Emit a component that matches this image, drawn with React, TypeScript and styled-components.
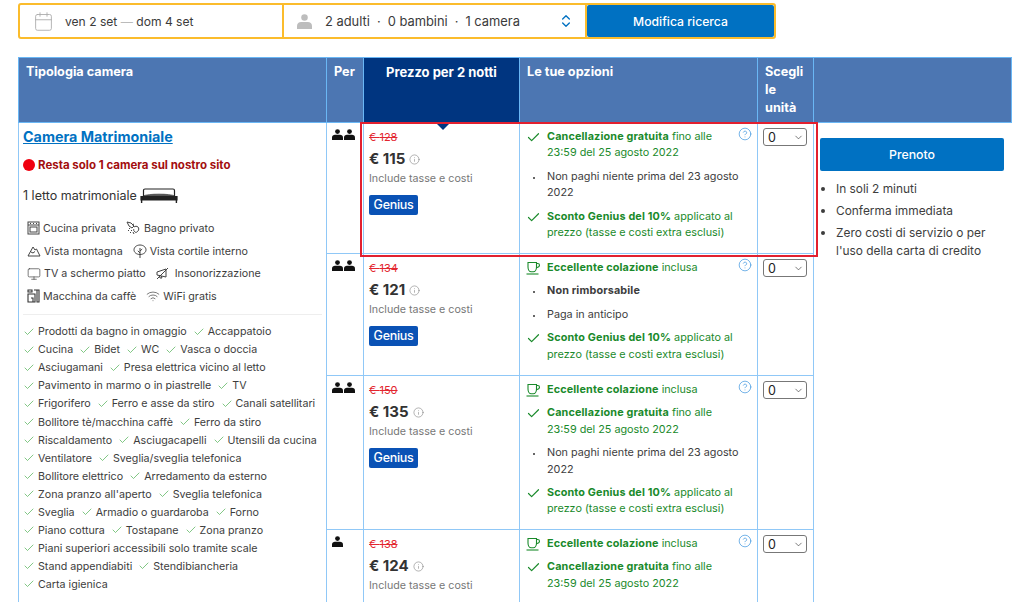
import React from 'react';
import styled, { createGlobalStyle } from 'styled-components';
import { Calendar, Check, ChevronDown, ChevronsUpDown, CircleHelp, Info, Monitor, Wifi } from 'lucide-react';

const GlobalStyle = createGlobalStyle`
  html, body {
    margin: 0;
    height: 602px;
    overflow: hidden;
    background: #fff;
    font-family: Inter, "Liberation Sans", sans-serif;
    color: #333;
  }
  * { box-sizing: border-box; }
`;

const Page = styled.div`
  padding: 3px 13px 0 18px;
`;

const SearchBar = styled.div`
  display: flex;
  width: 758px;
  height: 36px;
  border: 2px solid #fbbc2c;
  border-radius: 3px;
  margin-bottom: 18px;
  color: #3b3b3b;
`;

const SearchField = styled.div<{ $width: number }>`
  display: flex;
  align-items: center;
  width: ${(p) => p.$width}px;
  padding-left: 13px;
  border-right: 2px solid #fbbc2c;
  position: relative;
`;

const FieldText = styled.span<{ $left: number; $size: number }>`
  margin-left: ${(p) => p.$left}px;
  font-size: ${(p) => p.$size}px;
  white-space: pre;
`;

const Muted = styled.span`
  color: #bbb;
`;

const Dot = styled.span`
  margin: 0 7px;
`;

const StepperIcon = styled.span`
  position: absolute;
  right: 11px;
  top: 8px;
  display: flex;
  color: #0071c2;
`;

const SearchButton = styled.button`
  flex: 1;
  border: 0;
  border-radius: 2px;
  background: #0071c2;
  color: #fff;
  font: 500 12.2px Inter, "Liberation Sans", sans-serif;
`;

const Frame = styled.div`
  position: relative;
  width: 993px;
`;

const RedBox = styled.div`
  position: absolute;
  left: 342px;
  top: 65px;
  width: 458px;
  height: 135px;
  border: 2px solid #e2202f;
  pointer-events: none;
`;

const Table = styled.table`
  width: 993px;
  table-layout: fixed;
  border-collapse: collapse;
`;

const HeadCell = styled.th<{ $active?: boolean; $center?: boolean }>`
  position: relative;
  height: 65px;
  padding: 5px 7px 0;
  vertical-align: top;
  text-align: ${(p) => (p.$center ? 'center' : 'left')};
  font-size: ${(p) => (p.$center ? 13 : 12.7)}px;
  font-weight: 700;
  line-height: 18px;
  color: #fff;
  background: ${(p) => (p.$active ? '#003580' : '#4c76b2')};
  border: 1px solid #6ab7f5;

  ${(p) =>
    p.$active &&
    `&::after {
      content: "";
      position: absolute;
      left: 71px;
      bottom: -8px;
      border-left: 8px solid transparent;
      border-right: 8px solid transparent;
      border-top: 8px solid #003580;
    }`}
`;

const Cell = styled.td`
  padding: 0;
  vertical-align: top;
  border: 1px solid #90c8f7;
`;

const RoomCell = styled(Cell)`
  padding: 4px 4px 0;
`;

const SideCell = styled.td`
  padding: 15px 6px 0;
  vertical-align: top;
`;

const RoomName = styled.a`
  display: block;
  font-size: 14.3px;
  font-weight: 700;
  line-height: 20px;
  color: #0071c2;
  text-decoration: underline;
`;

const Scarcity = styled.div`
  display: flex;
  align-items: center;
  gap: 3px;
  margin-top: 11px;
  font-size: 11.5px;
  font-weight: 700;
  line-height: 14px;
  color: #a30e0e;
`;

const RedDot = styled.span`
  width: 12px;
  height: 12px;
  border-radius: 50%;
  background: #f0000f;
`;

const BedLine = styled.div`
  display: flex;
  align-items: center;
  gap: 3px;
  margin-top: 14px;
  font-size: 12.5px;
  line-height: 20px;
`;

const Facilities = styled.div`
  margin: 11px 0 8px;
  padding: 0 4px 6px;
  border-bottom: 1px solid #eee;
`;

const FacilityRow = styled.div`
  display: flex;
  align-items: center;
  gap: 10px;
  height: 22.7px;
`;

const Facility = styled.span`
  display: flex;
  align-items: center;
  gap: 3px;
  font-size: 10.7px;
  color: #3d3d3d;
  white-space: pre;

  svg {
    flex: none;
    color: #444;
  }
`;

const AmenityRow = styled.div`
  display: flex;
  gap: 6px;
  height: 18.05px;
  align-items: center;
`;

const Amenity = styled.span`
  display: flex;
  align-items: center;
  gap: 3px;
  font-size: 10.7px;
  color: #3d3d3d;
  white-space: nowrap;

  svg {
    flex: none;
    color: #4caf50;
  }
`;

const PersonsCell = styled(Cell)`
  padding: 6px 0 0 5px;
`;

const PriceCell = styled(Cell)`
  padding: 7px 5px 0;
`;

const OldPrice = styled.div`
  font-size: 11px;
  line-height: 14px;
  color: #e3262f;
  text-decoration: line-through;
`;

const Price = styled.div`
  display: flex;
  align-items: center;
  gap: 4px;
  margin-top: 5px;
  font-size: 15px;
  font-weight: 700;
  line-height: 20px;
  color: #333;

  svg {
    color: #777;
  }
`;

const Taxes = styled.div`
  margin-top: 3px;
  font-size: 10.7px;
  line-height: 14px;
  color: #777;
`;

const Genius = styled.span`
  display: inline-block;
  width: 49px;
  height: 20px;
  margin-top: 9px;
  border-radius: 2px;
  background: #0a52b5;
  color: #fff;
  font-size: 12.5px;
  font-weight: 500;
  line-height: 20px;
  text-align: center;
  letter-spacing: -0.3px;
`;

const OptionsCell = styled(Cell)`
  position: relative;
  padding: 6px 0 0 6px;
`;

const Help = styled.span`
  position: absolute;
  right: 5px;
  top: 4px;
  display: flex;
  color: #3b93de;
`;

const Option = styled.div`
  display: flex;
  margin-bottom: 7px;
  font-size: 10.8px;
  line-height: 16.4px;
`;

const OptionIcon = styled.span`
  flex: none;
  display: flex;
  justify-content: center;
  width: 15px;
  margin-right: 6px;
  padding-top: 1px;
  color: #1a8a2b;
`;

const Bullet = styled.span`
  width: 2px;
  height: 2px;
  margin-top: 7px;
  border-radius: 50%;
  background: #333;
`;

const OptionText = styled.span<{ $tone: 'good' | 'plain' }>`
  width: 192px;
  white-space: pre-line;
  color: ${(p) => (p.$tone === 'good' ? '#1a8a2b' : '#3d3d3d')};

  strong {
    letter-spacing: 0.15px;
  }
`;

const ChooseCell = styled(Cell)`
  padding: 5px 0 0 5px;
`;

const Select = styled.div`
  position: relative;
  display: flex;
  align-items: center;
  width: 44px;
  height: 18px;
  padding-left: 4px;
  border: 1px solid #777;
  border-radius: 3px;
  font-size: 12.5px;
  color: #222;

  svg {
    position: absolute;
    right: 2px;
    top: 3px;
    color: #333;
  }
`;

const BookButton = styled.button`
  display: block;
  width: 184px;
  height: 33px;
  border: 0;
  border-radius: 2px;
  background: #0071c2;
  color: #fff;
  font: 500 12.3px Inter, "Liberation Sans", sans-serif;
`;

const Perks = styled.ul`
  margin: 9px 0 0;
  padding: 0 0 0 16px;
  font-size: 11.9px;
  line-height: 18px;
  color: #3d3d3d;

  li {
    margin-bottom: 4px;
  }
`;

const Persons = styled.div`
  display: flex;
  gap: 1px;
`;

const PersonGlyph: React.FC<{ color?: string; size?: number }> = ({ color = '#111', size = 11 }) => (
  <svg width={size} height={size} viewBox="0 0 11 11" fill={color}>
    <circle cx="5.5" cy="2.6" r="2.4" />
    <path d="M0 11V8.6C0 6.8 1.4 5.8 3 5.8h5c1.6 0 3 1 3 2.8V11z" />
  </svg>
);

const BedIcon = () => (
  <svg width="38" height="16" viewBox="0 0 38 16" fill="none" stroke="#222" strokeWidth="1.2">
    <path d="M3.5 8V2.5C3.5 1.6 4.1 1 5 1h28c.9 0 1.5.6 1.5 1.5V8" />
    <path d="M3 8c5-2.5 27-2.5 32 0" fill="#555" strokeWidth="0.6" />
    <path d="M1 8.5h36v3.5H1z" fill="#222" />
    <path d="M1.6 12v3M36.4 12v3" strokeWidth="1.4" />
  </svg>
);

const CupIcon = () => (
  <svg width="15" height="15" viewBox="0 0 15 15" fill="none" stroke="currentColor" strokeWidth="1.1">
    <path d="M2 1.5h8.5v4.5c0 2.6-1.5 4.8-3.2 4.8H5.2C3.5 10.8 2 8.6 2 6z" />
    <path d="M10.5 2.5h1.2c1.2 0 1.8.8 1.8 1.8s-.8 2-3.4 2.6" />
    <path d="M0.5 13h12" />
  </svg>
);

const KitchenIcon = () => (
  <svg width="13" height="14" viewBox="0 0 13 14" fill="none" stroke="#444" strokeWidth="1">
    <rect x="1" y="1" width="11" height="12" />
    <path d="M1 4h11" />
    <rect x="3" y="6" width="7" height="5" />
    <path d="M3 2.5h1M6 2.5h1M9 2.5h1" />
  </svg>
);

const ShowerIcon = () => (
  <svg width="15" height="15" viewBox="0 0 15 15" fill="none" stroke="#444" strokeWidth="1">
    <path d="M1 1l4 1 3 3-2 2-3-2z" />
    <path d="M6 4l2-1M8 6c1-1 3-1 4 0s1 3 0 4-2 2-3 1-2-2-1-3" />
    <path d="M3 7l1 1M5 9l1 1M7 11l1 2M2 9l1 1M4 11l1 1" />
  </svg>
);

const MountainIcon = () => (
  <svg width="14" height="12" viewBox="0 0 14 12" fill="none" stroke="#444" strokeWidth="1">
    <path d="M1 11L6 2l2 3 1.5-1L13 11z" />
    <path d="M4 7l2 1 2-1.5" />
  </svg>
);

const TreeIcon = () => (
  <svg width="14" height="15" viewBox="0 0 14 15" fill="none" stroke="#444" strokeWidth="1">
    <path d="M7 1c3.4 0 6 2.2 6 4.8 0 2.7-2.6 4.7-6 4.7S1 8.500 1 5.800C1 3.200 3.600 1 7 1z" />
    <path d="M7 14V4M7 7l2.200-2M7 9L4.800 6.800" />
  </svg>
);

const QuietIcon = () => (
  <svg width="13" height="13" viewBox="0 0 13 13" fill="none" stroke="#444" strokeWidth="1">
    <path d="M1 5l9-3v8L1 8z" />
    <path d="M3 8.500l1 2.500h2l-.8-2M1 12L12 1" />
  </svg>
);

const CoffeeMachineIcon = () => (
  <svg width="13" height="14" viewBox="0 0 13 14" fill="none" stroke="#333" strokeWidth="1.1">
    <path d="M1 1h4v2H1zM1 5h7v8H1zM10 1h2v12h-2zM7 1h3M4 9h2v4" />
  </svg>
);

type Item = { icon: React.ReactNode; label: string };

const facilityRows: Item[][] = [
  [
    { icon: <KitchenIcon />, label: 'Cucina privata' },
    { icon: <ShowerIcon />, label: 'Bagno privato' },
  ],
  [
    { icon: <MountainIcon />, label: 'Vista montagna' },
    { icon: <TreeIcon />, label: 'Vista cortile interno' },
  ],
  [
    { icon: <Monitor size={14} strokeWidth={1.2} />, label: 'TV a schermo piatto' },
    { icon: <QuietIcon />, label: ' Insonorizzazione' },
  ],
  [
    { icon: <CoffeeMachineIcon />, label: 'Macchina da caffè' },
    { icon: <Wifi size={14} strokeWidth={1.2} />, label: 'WiFi gratis' },
  ],
];

const amenityRows = [
  ['Prodotti da bagno in omaggio', 'Accappatoio'],
  ['Cucina', 'Bidet', 'WC', 'Vasca o doccia'],
  ['Asciugamani', 'Presa elettrica vicino al letto'],
  ['Pavimento in marmo o in piastrelle', 'TV'],
  ['Frigorifero', 'Ferro e asse da stiro', 'Canali satellitari'],
  ['Bollitore tè/macchina caffè', 'Ferro da stiro'],
  ['Riscaldamento', 'Asciugacapelli', 'Utensili da cucina'],
  ['Ventilatore', 'Sveglia/sveglia telefonica'],
  ['Bollitore elettrico', 'Arredamento da esterno'],
  ["Zona pranzo all'aperto", 'Sveglia telefonica'],
  ['Sveglia', 'Armadio o guardaroba', 'Forno'],
  ['Piano cottura', 'Tostapane', 'Zona pranzo'],
  ['Piani superiori accessibili solo tramite scale'],
  ['Stand appendiabiti', 'Stendibiancheria'],
  ['Carta igienica'],
];

type Opt = { kind: 'check' | 'cup' | 'dot'; bold?: string; text?: string };

const cancel: Opt = { kind: 'check', bold: 'Cancellazione gratuita', text: ' fino alle\n23:59 del 25 agosto 2022' };
const payLater: Opt = { kind: 'dot', text: 'Non paghi niente prima del 23 agosto\n2022' };
const genius: Opt = { kind: 'check', bold: 'Sconto Genius del 10%', text: ' applicato al\nprezzo (tasse e costi extra esclusi)' };
const breakfast: Opt = { kind: 'cup', bold: 'Eccellente colazione', text: ' inclusa' };

// the last row runs off the bottom of the picture, only its visible part is kept
const rooms = [
  { persons: 2, old: 128, price: 115, height: 131, badge: true, options: [cancel, payLater, genius] },
  {
    persons: 2,
    old: 134,
    price: 121,
    height: 122,
    badge: true,
    options: [
      breakfast,
      { kind: 'dot', bold: 'Non rimborsabile' } as Opt,
      { kind: 'dot', text: 'Paga in anticipo' } as Opt,
      genius,
    ],
  },
  { persons: 2, old: 150, price: 135, height: 154, badge: true, options: [breakfast, cancel, payLater, genius] },
  { persons: 1, old: 138, price: 124, height: 74, badge: false, options: [breakfast, cancel] },
];

const OptionLine: React.FC<{ option: Opt }> = ({ option }) => (
  <Option>
    <OptionIcon>
      {option.kind === 'check' && <Check size={15} strokeWidth={1.9} />}
      {option.kind === 'cup' && <CupIcon />}
      {option.kind === 'dot' && <Bullet />}
    </OptionIcon>
    <OptionText $tone={option.kind === 'dot' ? 'plain' : 'good'}>
      {option.bold && <strong>{option.bold}</strong>}
      {option.text}
    </OptionText>
  </Option>
);

const App: React.FC = () => (
  <Page>
    <GlobalStyle />
    <SearchBar>
      <SearchField $width={264}>
        <Calendar size={21} strokeWidth={1} color="#aaa" />
        <FieldText $left={11} $size={12.1}>
          ven 2 set <Muted>—</Muted> dom 4 set
        </FieldText>
      </SearchField>
      <SearchField $width={303}>
        <PersonGlyph color="#bdbdbd" size={15} />
        <FieldText $left={13} $size={12.9}>
          2 adulti<Dot>·</Dot>0 bambini<Dot>·</Dot>1 camera
        </FieldText>
        <StepperIcon>
          <ChevronsUpDown size={16} strokeWidth={2} />
        </StepperIcon>
      </SearchField>
      <SearchButton>Modifica ricerca</SearchButton>
    </SearchBar>

    <Frame>
      <Table>
        <colgroup>
          <col style={{ width: 308 }} />
          <col style={{ width: 37 }} />
          <col style={{ width: 156 }} />
          <col style={{ width: 238 }} />
          <col style={{ width: 56 }} />
          <col style={{ width: 198 }} />
        </colgroup>
        <thead>
          <tr>
            <HeadCell>Tipologia camera</HeadCell>
            <HeadCell>Per</HeadCell>
            <HeadCell $active $center>
              Prezzo per 2 notti
            </HeadCell>
            <HeadCell>Le tue opzioni</HeadCell>
            <HeadCell>Scegli le unità</HeadCell>
            <HeadCell />
          </tr>
        </thead>
        <tbody>
          {rooms.map((room, i) => (
            <tr key={room.price} style={{ height: room.height }}>
              {i === 0 && (
                <RoomCell rowSpan={4}>
                  <RoomName>Camera Matrimoniale</RoomName>
                  <Scarcity>
                    <RedDot />
                    Resta solo 1 camera sul nostro sito
                  </Scarcity>
                  <BedLine>
                    1 letto matrimoniale
                    <BedIcon />
                  </BedLine>
                  <Facilities>
                    {facilityRows.map((row, r) => (
                      <FacilityRow key={r}>
                        {row.map((f) => (
                          <Facility key={f.label}>
                            {f.icon}
                            {f.label}
                          </Facility>
                        ))}
                      </FacilityRow>
                    ))}
                  </Facilities>
                  {amenityRows.map((row, r) => (
                    <AmenityRow key={r}>
                      {row.map((label) => (
                        <Amenity key={label}>
                          <Check size={12} strokeWidth={1.4} />
                          {label}
                        </Amenity>
                      ))}
                    </AmenityRow>
                  ))}
                </RoomCell>
              )}
              <PersonsCell>
                <Persons>
                  {Array.from({ length: room.persons }).map((_, n) => (
                    <PersonGlyph key={n} />
                  ))}
                </Persons>
              </PersonsCell>
              <PriceCell>
                <OldPrice>€ {room.old}</OldPrice>
                <Price>
                  € {room.price}
                  <Info size={11} strokeWidth={1.2} />
                </Price>
                <Taxes>Include tasse e costi</Taxes>
                {room.badge && <Genius>Genius</Genius>}
              </PriceCell>
              <OptionsCell>
                {room.options.map((o, n) => (
                  <OptionLine key={n} option={o} />
                ))}
                <Help>
                  <CircleHelp size={14} strokeWidth={1.2} />
                </Help>
              </OptionsCell>
              <ChooseCell>
                <Select>
                  0
                  <ChevronDown size={11} strokeWidth={1.4} />
                </Select>
              </ChooseCell>
              {i === 0 && (
                <SideCell rowSpan={4}>
                  <BookButton>Prenoto</BookButton>
                  <Perks>
                    <li>In soli 2 minuti</li>
                    <li>Conferma immediata</li>
                    <li>Zero costi di servizio o per l'uso della carta di credito</li>
                  </Perks>
                </SideCell>
              )}
            </tr>
          ))}
        </tbody>
      </Table>
      <RedBox />
    </Frame>
  </Page>
);

export default App;
